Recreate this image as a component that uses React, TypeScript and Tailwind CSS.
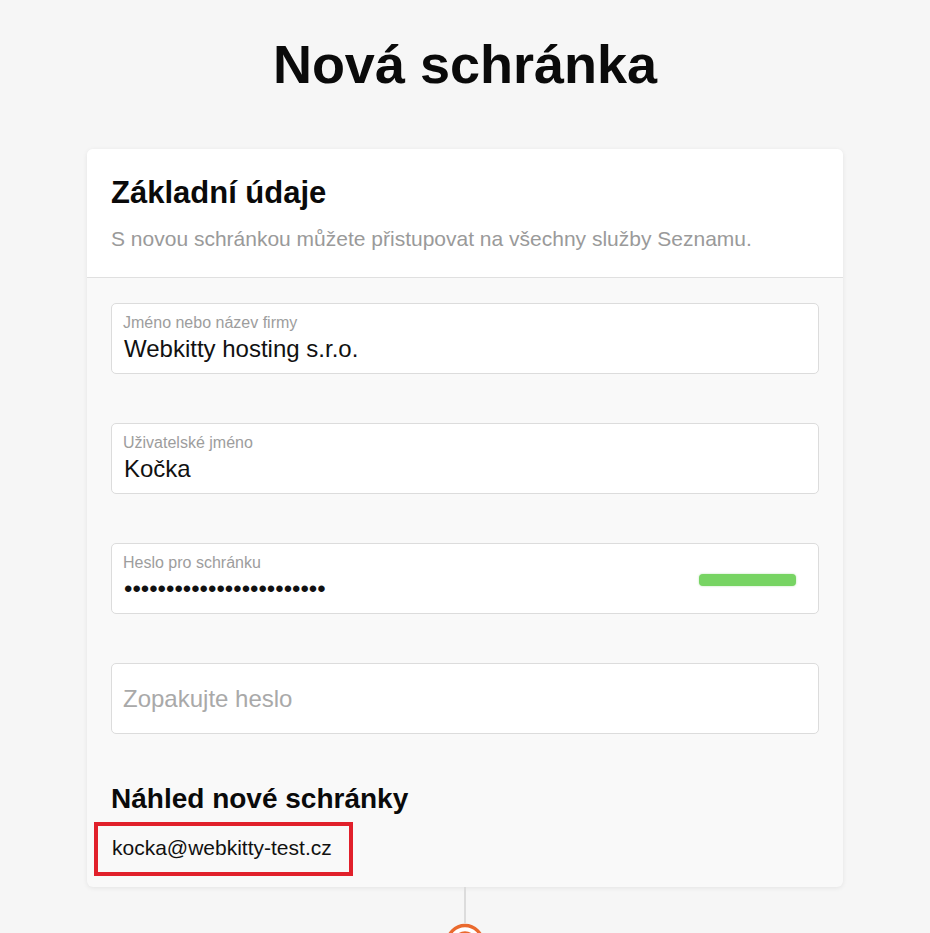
import React from "react";

const font = { fontFamily: '"Liberation Sans", Arial, sans-serif' };

function Field({ label, value, extra }: { label: string; value: string; extra?: React.ReactNode }) {
  return (
    <div className="h-[71px] w-full rounded-[5px] border border-[#dcdcdc] bg-white pl-[11px] flex items-center justify-between">
      <div className="flex flex-col gap-[3px]">
        <div className="text-[16px] leading-[18px] text-[#9d9d9d]">{label}</div>
        <div className="text-[24px] leading-[28px] text-[#111] pl-[1px]">{value}</div>
      </div>
      {extra}
    </div>
  );
}

export default function App() {
  return (
    <div className="h-[933px] w-full overflow-hidden bg-[#f6f6f6] flex flex-col items-center" style={font}>
      <h1 className="shrink-0 mt-[32px] text-[54px] leading-[64px] font-bold text-[#0a0a0a]">Nová schránka</h1>
      <div className="shrink-0 mt-[53px] w-[756px] rounded-[6px] bg-[#f9f9f9] shadow-[0_1px_5px_rgba(0,0,0,0.08)]">
        <div className="rounded-t-[6px] bg-white border-b border-[#e0e0e0] px-[24px] pt-[26px] pb-[24px]">
          <h2 className="text-[31px] leading-[36px] font-bold text-[#0a0a0a]">Základní údaje</h2>
          <p className="mt-[14px] text-[21px] leading-[28px] text-[#9a9a9a]">
            S novou schránkou můžete přistupovat na všechny služby Seznamu.
          </p>
        </div>
        <div className="px-[24px] pt-[25px] pb-[11px] flex flex-col">
          <div className="flex flex-col gap-[49px]">
            <Field label="Jméno nebo název firmy" value="Webkitty hosting s.r.o." />
            <Field label="Uživatelské jméno" value="Kočka" />
            <Field
              label="Heslo pro schránku"
              value={"•".repeat(24)}
              extra={<div className="mr-[22px] mt-[3px] h-[12px] w-[97px] rounded-[4px] bg-[#77d463] shadow-[0_0_2px_rgba(100,200,80,0.5)]" />}
            />
            <div className="h-[71px] w-full rounded-[5px] border border-[#dcdcdc] bg-white pl-[11px] flex items-center">
              <span className="text-[24px] leading-[28px] text-[#a9a9a9]">Zopakujte heslo</span>
            </div>
          </div>
          <h3 className="mt-[49px] text-[28px] leading-[32px] font-bold text-[#0a0a0a]">Náhled nové schránky</h3>
          <div className="mt-[7px] -ml-[17px] self-start border-[4px] border-[#e1202b] pl-[14px] pr-[17px] pt-[10px] pb-[12px]">
            <span className="block text-[21px] leading-[24px] text-[#111]">kocka@webkitty-test.cz</span>
          </div>
        </div>
      </div>
      <div className="shrink-0 h-[36px] w-[2px] bg-[#dcdcdc]" />
      <svg width="40" height="40" viewBox="0 0 40 40" className="shrink-0">
        <circle cx="20" cy="20" r="17.5" fill="white" stroke="#ea6a2e" strokeWidth="3.5" />
        <circle cx="20" cy="20" r="10" fill="white" stroke="#ea6a2e" strokeWidth="3.5" />
        <circle cx="20" cy="20" r="4" fill="#ea6a2e" />
      </svg>
    </div>
  );
}
